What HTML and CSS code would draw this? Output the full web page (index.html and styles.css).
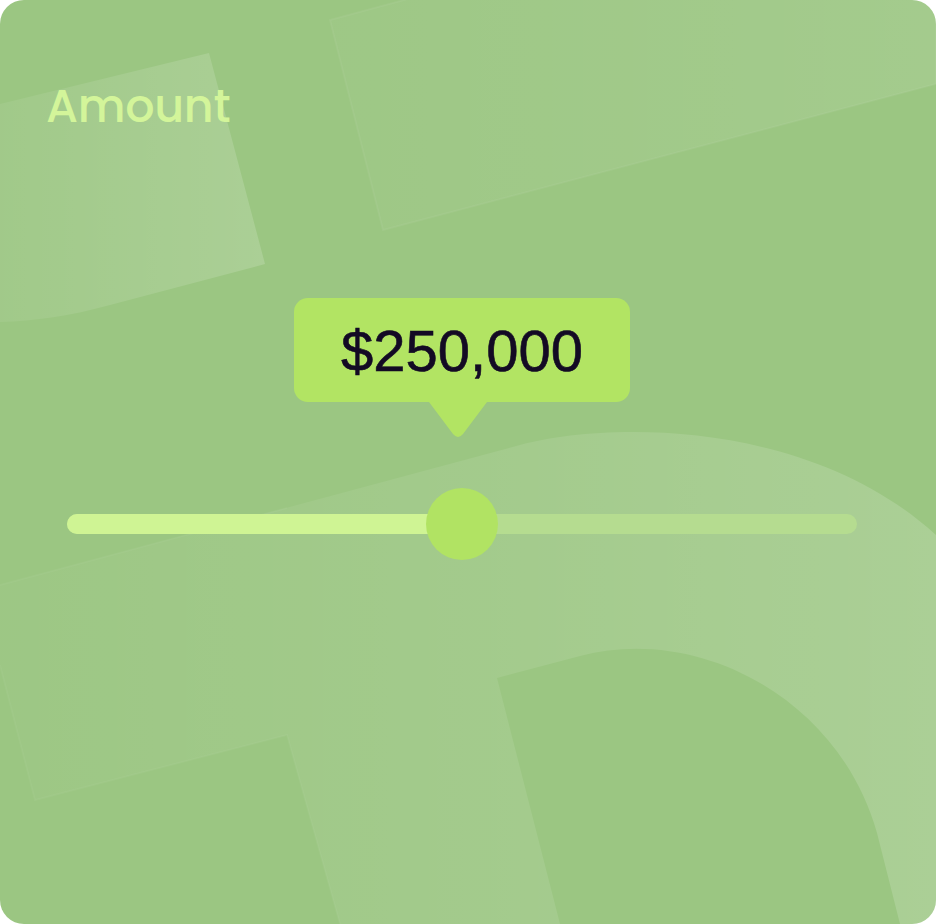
FILE: index.html
```html
<!DOCTYPE html>
<html lang="en">
<head>
<meta charset="utf-8">
<title>Amount</title>
<link rel="stylesheet" href="styles.css">
</head>
<body>
<div class="card">
  <svg class="decor" viewBox="0 0 936 924" width="936" height="924" aria-hidden="true">
    <defs>
      <linearGradient id="g1" x1="0" y1="0" x2="1" y2="0">
        <stop offset="0" stop-color="#fff" stop-opacity="0.06"/>
        <stop offset="1" stop-color="#fff" stop-opacity="0.16"/>
      </linearGradient>
      <linearGradient id="g2" x1="0" y1="0" x2="1" y2="0">
        <stop offset="0" stop-color="#fff" stop-opacity="0.03"/>
        <stop offset="1" stop-color="#fff" stop-opacity="0.09"/>
      </linearGradient>
      <linearGradient id="g3" x1="0" y1="0" x2="1" y2="0">
        <stop offset="0" stop-color="#fff" stop-opacity="0.02"/>
        <stop offset="0.5" stop-color="#fff" stop-opacity="0.08"/>
        <stop offset="1" stop-color="#fff" stop-opacity="0.16"/>
      </linearGradient>
    </defs>
    <path d="M0,104 L209,53 L265,264 L110,305 C70,316 35,321 0,322 Z" fill="url(#g1)"/>
    <path d="M330,20 L415,-3 L936,-3 L936,84 L383,230 Z" fill="url(#g2)" stroke="#fff" stroke-opacity="0.05" stroke-width="2"/>
    <path d="M0,585 L520,445 C610,421 810,420 936,535 L936,924 L900,924 L877,833 C840,700 700,624 580,656 L497,678 L560,924 L340,924 L287,735 L35,800 L0,665 Z" fill="url(#g3)"/>
    <path d="M0,585 L287,508 M0,665 L35,800 L287,735 L340,924" fill="none" stroke="#fff" stroke-opacity="0.04" stroke-width="2"/>
  </svg>
  <div class="content">
    <h1 class="label">Amount</h1>
    <div class="slider">
      <div class="tooltip">
        <div class="bubble">$250,000</div>
        <svg class="arrow" viewBox="0 0 58 35" width="58" height="35" aria-hidden="true">
          <path d="M0,0 L58,0 L34,32 Q29,38 24,32 Z" fill="#b2e463"/>
        </svg>
      </div>
      <div class="track">
        <div class="fill" style="width:50%"></div>
        <div class="thumb" style="left:50%"></div>
      </div>
    </div>
  </div>
</div>
</body>
</html>
```

FILE: styles.css
```css
html, body {
  margin: 0;
  padding: 0;
  background: #ffffff;
}

.card {
  position: relative;
  width: 936px;
  height: 924px;
  border-radius: 24px;
  overflow: hidden;
  background: #9bc682;
}

.decor {
  position: absolute;
  left: 0;
  top: 0;
  display: block;
}

.content {
  position: relative;
  padding: 77px 0 0 46px;
}

.label {
  margin: 0;
  font-family: "Poppins", "Inter", "Noto Sans", sans-serif;
  font-weight: 500;
  font-size: 46px;
  line-height: 58px;
  letter-spacing: -0.3px;
  color: #d3f59a;
}

.slider {
  width: 790px;
  margin: 163px 0 0 21px;
}

.tooltip {
  width: 336px;
  margin-left: calc(50% - 168px);
  display: flex;
  flex-direction: column;
  align-items: center;
}

.bubble {
  width: 100%;
  height: 104px;
  border-radius: 14px;
  background: #b2e463;
  display: flex;
  align-items: center;
  justify-content: center;
  font-family: "Liberation Sans", Arial, sans-serif;
  font-weight: 400;
  font-size: 58px;
  color: #130a24;
  -webkit-text-stroke: 0.6px #130a24;
}

.arrow {
  display: block;
  margin-left: -8px;
}

.track {
  position: relative;
  margin-top: 77px;
  height: 20px;
  border-radius: 10px;
  background: #b5dc90;
}

.fill {
  height: 100%;
  border-radius: 10px 0 0 10px;
  background: #cff494;
}

.thumb {
  position: absolute;
  top: 50%;
  width: 72px;
  height: 72px;
  margin: -36px 0 0 -36px;
  border-radius: 50%;
  background: #b1e363;
}
```
